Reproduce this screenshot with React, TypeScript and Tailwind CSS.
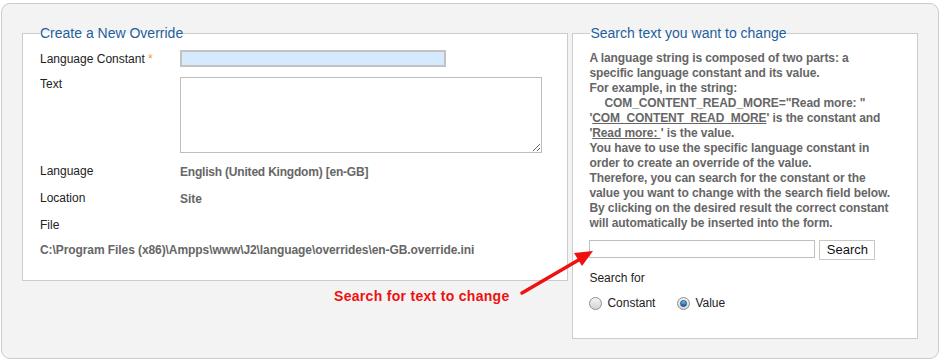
import React from "react";

function Radio({ checked }: { checked?: boolean }) {
	return (
		<span className="flex justify-center items-center bg-gradient-to-b from-[#f4f4f4] to-[#d4d4d4] border border-[#8f8f8f] rounded-full w-[13px] h-[13px]">
			{checked && (
				<span className="bg-gradient-to-b from-[#7fc4f0] to-[#0b5c9c] border border-[#174e7c] rounded-full w-[7px] h-[7px]" />
			)}
		</span>
	);
}

function Row({ label, children }: { label: string; children?: React.ReactNode }) {
	return (
		<div className="flex items-center mt-[13px] h-[14px] leading-[14px]">
			<span className="w-[140px] text-[#222]">{label}</span>
			{children}
		</div>
	);
}

export default function App() {
	return (
		<div className="font-['Liberation_Sans',Arial,sans-serif] text-[12px]">
			<div className="relative flex gap-[4px] bg-[#f3f3f3] mt-[3px] ml-px px-[20px] pt-[21px] border border-[#cccccc] rounded-[9px] w-[938px] h-[356px]">
				<fieldset className="self-start px-[17px] pb-[23px] border border-[#cccccc] bg-white w-[547px]">
					<legend className="text-[#1f5f9c] text-[14px] leading-[16px]">Create a New Override</legend>
					<div className="flex items-center mt-[9px] h-[17px]">
						<span className="w-[140px] text-[#222]">
							Language Constant <span className="text-[#f39a3a]">*</span>
						</span>
						<input className="bg-[#d5eafd] border-2 border-[#c2c2c2] outline-none w-[266px] h-[17px]" />
					</div>
					<div className="flex items-start mt-[10px]">
						<span className="w-[140px] text-[#222] leading-[14px]">Text</span>
						<textarea className="border border-[#bdbdbd] outline-none w-[362px] h-[76px]" />
					</div>
					<div className="flex items-center mt-[11px] h-[14px] leading-[14px]">
						<span className="w-[140px] text-[#222]">Language</span>
						<span className="mt-[2px] font-bold text-[#666] tracking-[-0.2px]">English (United Kingdom) [en-GB]</span>
					</div>
					<Row label="Location">
						<span className="mt-[2px] font-bold text-[#666]">Site</span>
					</Row>
					<Row label="File" />
					<div className="mt-[11px] font-bold text-[#666] leading-[14px] tracking-[-0.08px]">
						C:\Program Files (x86)\Ampps\www\J2\language\overrides\en-GB.override.ini
					</div>
				</fieldset>

				<fieldset className="self-start px-[16px] pb-[28px] border border-[#cccccc] bg-white w-[346px]">
					<legend className="ml-[1px] text-[#1f5f9c] text-[14px] leading-[16px]">Search text you want to change</legend>
					<p className="mt-[10px] font-bold text-[#666] leading-[15px] tracking-[-0.08px] whitespace-nowrap">
						A language string is composed of two parts: a<br />
						specific language constant and its value.<br />
						For example, in the string:<br />
						<span className="pl-[15px]">COM_CONTENT_READ_MORE="Read more: "</span>
						<br />'<span className="underline">COM_CONTENT_READ_MORE</span>' is the constant and<br />'
						<span className="underline">Read more: </span>' is the value.<br />
						You have to use the specific language constant in<br />
						order to create an override of the value.<br />
						Therefore, you can search for the constant or the<br />
						value you want to change with the search field below.<br />
						By clicking on the desired result the correct constant<br />
						will automatically be inserted into the form.
					</p>
					<div className="flex items-start gap-[4px] mt-[9px]">
						<input className="bg-white border border-[#bfbfbf] outline-none w-[226px] h-[18px]" />
						<button className="bg-white border border-[#c7c7c7] w-[56px] h-[20px] text-[#111] text-[13px] leading-[18px]">
							Search
						</button>
					</div>
					<div className="mt-[11px] text-[#222] leading-[14px]">Search for</div>
					<div className="flex items-center mt-[11px] h-[14px] text-[#222]">
						<Radio />
						<span className="ml-[5px]">Constant</span>
						<span className="ml-[22px]">
							<Radio checked />
						</span>
						<span className="ml-[5px]">Value</span>
					</div>
				</fieldset>

				<span className="top-[284px] left-[332px] absolute font-bold text-[#ee1111] text-[14px] leading-[16px] tracking-[0.3px]">
					Search for text to change
				</span>
				<svg className="top-[232px] left-[510px] absolute" width="90" height="60" viewBox="0 0 90 60">
					<line x1="10" y1="57" x2="70" y2="22" stroke="#ee1111" strokeWidth="3.5" strokeLinecap="round" />
					<polygon points="81,15 62,17 70,30" fill="#ee1111" />
				</svg>
			</div>
		</div>
	);
}
